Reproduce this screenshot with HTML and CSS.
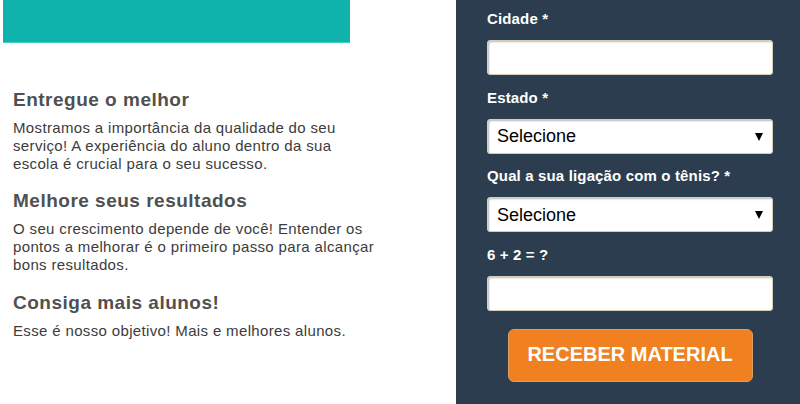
FILE: index.html
```html
<!DOCTYPE html>
<html lang="pt-BR">
<head>
<meta charset="utf-8">
<title>Receber material</title>
<link rel="stylesheet" href="styles.css">
</head>
<body>
<div class="page">
  <div class="left">
    <div class="banner"></div>
    <div class="features">
      <h3 class="feature-title">Entregue o melhor</h3>
      <p class="feature-text">Mostramos a importância da qualidade do seu serviço! A experiência do aluno dentro da sua escola é crucial para o seu sucesso.</p>
      <h3 class="feature-title">Melhore seus resultados</h3>
      <p class="feature-text">O seu crescimento depende de você! Entender os pontos a melhorar é o primeiro passo para alcançar bons resultados.</p>
      <h3 class="feature-title">Consiga mais alunos!</h3>
      <p class="feature-text">Esse é nosso objetivo! Mais e melhores alunos.</p>
    </div>
  </div>
  <div class="form-panel">
    <form class="lead-form">
      <div class="field">
        <label class="field-label">Cidade *</label>
        <input class="field-input" type="text">
      </div>
      <div class="field">
        <label class="field-label">Estado *</label>
        <div class="select-wrap">
          <select class="field-select"><option>Selecione</option></select>
        </div>
      </div>
      <div class="field">
        <label class="field-label">Qual a sua ligação com o tênis? *</label>
        <div class="select-wrap">
          <select class="field-select"><option>Selecione</option></select>
        </div>
      </div>
      <div class="field">
        <label class="field-label">6 + 2 = ?</label>
        <input class="field-input" type="text">
      </div>
      <div class="actions">
        <button class="submit" type="button">RECEBER MATERIAL</button>
      </div>
    </form>
  </div>
</div>
</body>
</html>
```
FILE: styles.css
```css
html, body {
  margin: 0;
  padding: 0;
  background: #ffffff;
}
body {
  width: 800px;
  height: 404px;
  overflow: hidden;
  font-family: "Liberation Sans", Arial, sans-serif;
}
.page {
  display: flex;
  height: 404px;
}
.left {
  width: 456px;
  flex: none;
}
.banner {
  margin-left: 3px;
  width: 347px;
  height: 42px;
  background: #0fb3ab;
  border-bottom: 1px solid #3fd0c6;
}
.features {
  padding: 45.5px 0 0 13px;
  width: 362px;
}
.feature-title {
  margin: 0 0 8px;
  font-size: 19px;
  line-height: 22px;
  font-weight: bold;
  letter-spacing: 0.5px;
  color: #505050;
}
.feature-text {
  margin: 0 0 17.5px;
  font-size: 15px;
  line-height: 18px;
  letter-spacing: 0.35px;
  color: #3c3c3c;
}
.form-panel {
  flex: 1;
  background: #2c3d4f;
  padding: 10px 27px 0 31px;
}
.lead-form {
  width: 286px;
}
.field {
  margin-bottom: 13.5px;
}
.field-label {
  display: block;
  margin-bottom: 12px;
  font-size: 15px;
  line-height: 18px;
  font-weight: bold;
  letter-spacing: 0.15px;
  color: #ffffff;
}
.field-input,
.field-select {
  display: block;
  box-sizing: border-box;
  width: 286px;
  height: 35px;
  margin: 0;
  border: 1px solid #d6ceb8;
  border-radius: 3px;
  background: #ffffff;
  box-shadow: inset 1px 1px 2px rgba(0, 0, 0, 0.28);
  font-family: "Liberation Sans", Arial, sans-serif;
  outline: none;
}
.field-select {
  -webkit-appearance: none;
  appearance: none;
  padding: 0 9px;
  font-size: 18px;
  color: #000000;
}
.select-wrap {
  position: relative;
}
.select-wrap::after {
  content: "";
  position: absolute;
  right: 10px;
  top: 14px;
  width: 0;
  height: 0;
  border-left: 4.5px solid transparent;
  border-right: 4.5px solid transparent;
  border-top: 8px solid #000000;
  pointer-events: none;
}
.actions {
  display: flex;
  justify-content: center;
  padding-top: 5px;
}
.submit {
  box-sizing: border-box;
  width: 245px;
  height: 53px;
  padding: 0 0 3px;
  border: 1px solid #d9a066;
  border-radius: 6px;
  background: #f08020;
  color: #ffffff;
  font-family: "Liberation Sans", Arial, sans-serif;
  font-size: 20px;
  font-weight: bold;
  cursor: pointer;
}
```
